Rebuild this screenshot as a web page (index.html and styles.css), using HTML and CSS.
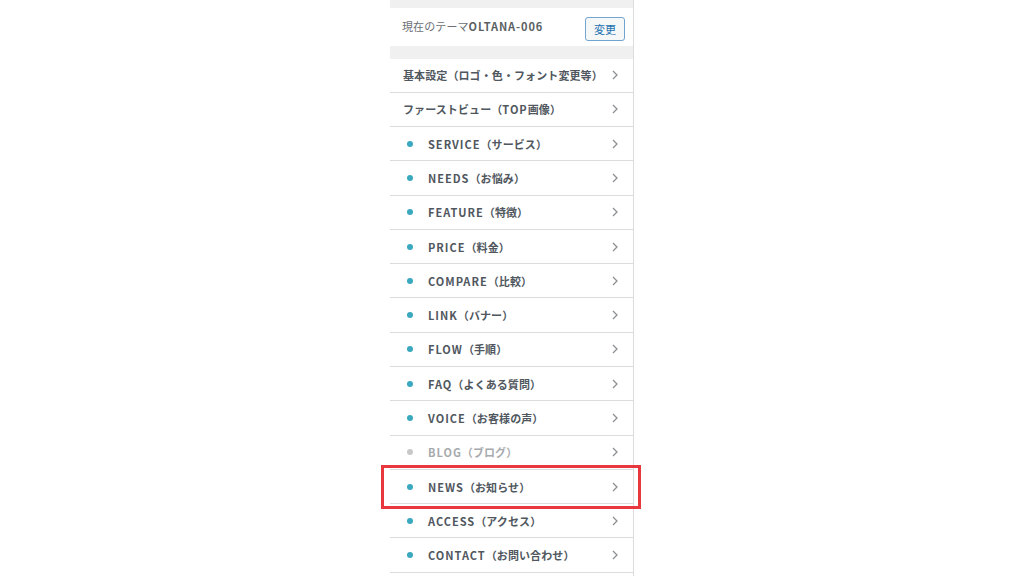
FILE: index.html
```html
<!DOCTYPE html>
<html lang="ja">
<head>
<meta charset="utf-8">
<link rel="stylesheet" href="styles.css">
</head>
<body>
<div class="panel">
  <div class="strip"></div>
  <div class="theme">
    <span class="theme-label">現在のテーマ<b>OLTANA-006</b></span>
    <button class="change">変更</button>
  </div>
  <div class="band"></div>
  <ul class="menu">
    <li class="row"><span class="label">基本設定（ロゴ・色・フォント変更等）</span><svg class="chev" viewBox="0 0 6 10"><polyline points="1,1 5,5 1,9"/></svg></li>
    <li class="row"><span class="label">ファーストビュー（<span class="en">TOP</span>画像）</span><svg class="chev" viewBox="0 0 6 10"><polyline points="1,1 5,5 1,9"/></svg></li>
    <li class="row sub"><i class="dot"></i><span class="label"><span class="en">SERVICE</span>（サービス）</span><svg class="chev" viewBox="0 0 6 10"><polyline points="1,1 5,5 1,9"/></svg></li>
    <li class="row sub"><i class="dot"></i><span class="label"><span class="en">NEEDS</span>（お悩み）</span><svg class="chev" viewBox="0 0 6 10"><polyline points="1,1 5,5 1,9"/></svg></li>
    <li class="row sub"><i class="dot"></i><span class="label"><span class="en">FEATURE</span>（特徴）</span><svg class="chev" viewBox="0 0 6 10"><polyline points="1,1 5,5 1,9"/></svg></li>
    <li class="row sub"><i class="dot"></i><span class="label"><span class="en">PRICE</span>（料金）</span><svg class="chev" viewBox="0 0 6 10"><polyline points="1,1 5,5 1,9"/></svg></li>
    <li class="row sub"><i class="dot"></i><span class="label"><span class="en">COMPARE</span>（比較）</span><svg class="chev" viewBox="0 0 6 10"><polyline points="1,1 5,5 1,9"/></svg></li>
    <li class="row sub"><i class="dot"></i><span class="label"><span class="en">LINK</span>（バナー）</span><svg class="chev" viewBox="0 0 6 10"><polyline points="1,1 5,5 1,9"/></svg></li>
    <li class="row sub"><i class="dot"></i><span class="label"><span class="en">FLOW</span>（手順）</span><svg class="chev" viewBox="0 0 6 10"><polyline points="1,1 5,5 1,9"/></svg></li>
    <li class="row sub"><i class="dot"></i><span class="label"><span class="en">FAQ</span>（よくある質問）</span><svg class="chev" viewBox="0 0 6 10"><polyline points="1,1 5,5 1,9"/></svg></li>
    <li class="row sub"><i class="dot"></i><span class="label"><span class="en">VOICE</span>（お客様の声）</span><svg class="chev" viewBox="0 0 6 10"><polyline points="1,1 5,5 1,9"/></svg></li>
    <li class="row sub off"><i class="dot"></i><span class="label"><span class="en">BLOG</span>（ブログ）</span><svg class="chev" viewBox="0 0 6 10"><polyline points="1,1 5,5 1,9"/></svg></li>
    <li class="row sub marked"><i class="dot"></i><span class="label"><span class="en">NEWS</span>（お知らせ）</span><svg class="chev" viewBox="0 0 6 10"><polyline points="1,1 5,5 1,9"/></svg></li>
    <li class="row sub"><i class="dot"></i><span class="label"><span class="en">ACCESS</span>（アクセス）</span><svg class="chev" viewBox="0 0 6 10"><polyline points="1,1 5,5 1,9"/></svg></li>
    <li class="row sub"><i class="dot"></i><span class="label"><span class="en">CONTACT</span>（お問い合わせ）</span><svg class="chev" viewBox="0 0 6 10"><polyline points="1,1 5,5 1,9"/></svg></li>
  </ul>
</div>
</body>
</html>
```
FILE: styles.css
```css
html, body {
  margin: 0;
  padding: 0;
  background: #ffffff;
  height: 576px;
  overflow: hidden;
}
body {
  font-family: "Noto Sans CJK JP", "Noto Sans", sans-serif;
  color: #50575e;
}
.panel {
  width: 243px;
  margin: 0 auto 0 390px;
  border-right: 1px solid #dcdcde;
  background: #ffffff;
  min-height: 576px;
}
.strip {
  height: 8px;
  background: #f0f0f1;
}
.theme {
  height: 38px;
  display: flex;
  align-items: center;
  justify-content: space-between;
  padding: 0 8px 0 12px;
}
.theme-label {
  font-size: 11px;
  color: #6c7075;
  margin-top: -2px;
  letter-spacing: 0.1px;
}
.theme-label b {
  font-weight: 700;
  color: #5a5f64;
  letter-spacing: 0.9px;
}
.change {
  width: 40px;
  height: 24px;
  margin-top: 4px;
  padding: 0;
  font-family: inherit;
  font-size: 11px;
  color: #2271b1;
  background: #f6f7f7;
  border: 1px solid #72a4d0;
  border-radius: 3px;
}
.band {
  height: 12.5px;
  background: #f0f0f1;
}
.menu {
  list-style: none;
  margin: 0;
  padding: 0;
}
.row {
  height: 33.29px;
  border-bottom: 1px solid #dcdcde;
  display: flex;
  align-items: center;
  padding: 0 15px 0 13px;
  font-size: 11px;
  font-weight: 700;
  letter-spacing: 0.1px;
  color: #50575e;
  position: relative;
}
.label {
  flex: 1;
  white-space: nowrap;
}
.en {
  letter-spacing: 1px;
}
.dot {
  width: 6px;
  height: 6px;
  border-radius: 50%;
  background: #3aa8bf;
  margin: 0 15px 0 4px;
  flex: none;
}
.off {
  color: #a7aaad;
}
.off .dot {
  background: #c8c8ca;
}
.chev {
  width: 6px;
  height: 10px;
  flex: none;
}
.chev polyline {
  fill: none;
  stroke: #8c8f94;
  stroke-width: 1.3;
}
.marked::after {
  content: "";
  position: absolute;
  left: -9px;
  right: -8px;
  top: -5px;
  bottom: -6px;
  border: 3px solid #e8383d;
}
```
